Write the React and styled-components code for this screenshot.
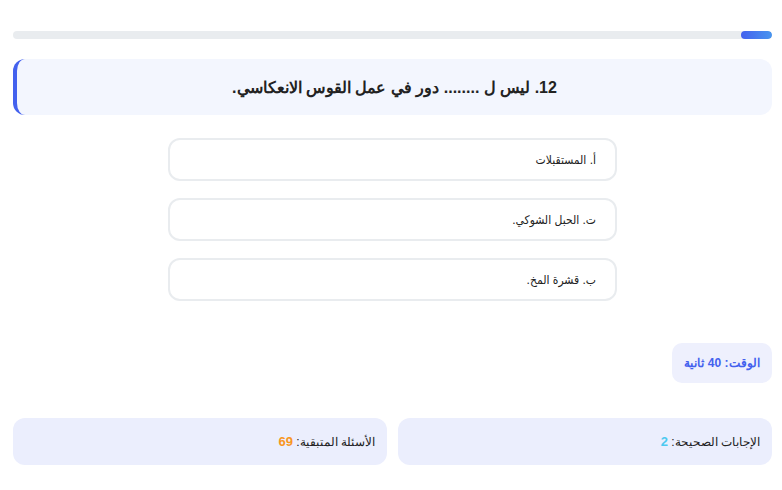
import React from 'react';
import styled, { createGlobalStyle } from 'styled-components';

const GlobalStyle = createGlobalStyle`
  body {
    margin: 0;
    background: #ffffff;
    font-family: "Liberation Sans", Arial, sans-serif;
  }
`;

const Page = styled.div`
  direction: rtl;
  padding: 31px 10px 0 13px;
`;

const Progress = styled.div`
  height: 8px;
  background: #e9ecef;
  border-radius: 4px;
  overflow: hidden;
  display: flex;
`;

const ProgressFill = styled.div`
  height: 100%;
  border-radius: 4px;
  background: linear-gradient(to left, #4895ef, #4361ee);
`;

const Question = styled.div`
  margin-top: 20px;
  height: 56px;
  box-sizing: border-box;
  display: flex;
  align-items: center;
  justify-content: center;
  background: #f3f6fe;
  border-left: 4px solid #4361ee;
  border-radius: 12px;
  font-size: 16px;
  font-weight: bold;
  color: #222;
`;

const Options = styled.div`
  width: 449px;
  margin: 23px auto 0;
  display: flex;
  flex-direction: column;
  gap: 17px;
`;

const Option = styled.div`
  height: 43px;
  box-sizing: border-box;
  border: 2px solid #e9ecef;
  border-radius: 12px;
  display: flex;
  align-items: center;
  padding: 0 19px;
  font-family: "Liberation Sans", "DejaVu Sans Condensed", sans-serif;
  font-size: 12px;
  color: #222;
  background: #fff;
`;

const TimerRow = styled.div`
  margin-top: 42px;
  display: flex;
`;

const Timer = styled.div`
  width: 100px;
  height: 40px;
  box-sizing: border-box;
  display: flex;
  align-items: center;
  justify-content: center;
  background: #eef0fd;
  border-radius: 10px;
  color: #4361ee;
  font-weight: bold;
  font-size: 12px;
`;

const Stats = styled.div`
  margin-top: 35px;
  display: grid;
  grid-template-columns: 1fr 1fr;
  gap: 11px;
`;

const Stat = styled.div`
  height: 47px;
  box-sizing: border-box;
  display: flex;
  align-items: center;
  padding: 0 12px;
  background: #ebeefd;
  border-radius: 12px;
  font-size: 12px;
  color: #222;
`;

const Value = styled.span`
  font-weight: bold;
  font-size: 13px;
  color: ${(p) => p.color};
`;

const options = ['أ. المستقبلات', 'ت. الحبل الشوكي.', 'ب. قشرة المخ.'];

export default function App() {
  return (
    <Page>
      <GlobalStyle />
      <Progress>
        <ProgressFill style={{ width: '4.1%' }} />
      </Progress>
      <Question>12. ليس ل ........ دور في عمل القوس الانعكاسي.</Question>
      <Options>
        {options.map((o) => (
          <Option key={o}>{o}</Option>
        ))}
      </Options>
      <TimerRow>
        <Timer>الوقت: 40 ثانية</Timer>
      </TimerRow>
      <Stats>
        <Stat>
          الإجابات الصحيحة:&nbsp;<Value color="#4cc9f0">2</Value>
        </Stat>
        <Stat>
          الأسئلة المتبقية:&nbsp;<Value color="#f8961e">69</Value>
        </Stat>
      </Stats>
    </Page>
  );
}
